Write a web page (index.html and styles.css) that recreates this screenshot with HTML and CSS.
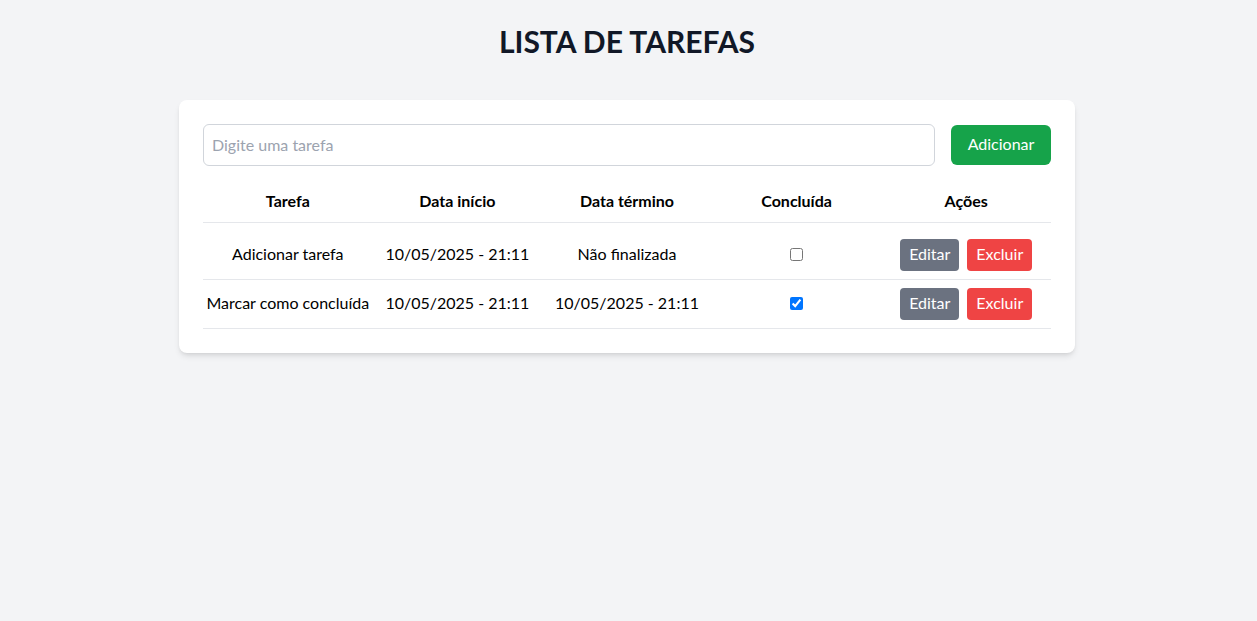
FILE: index.html
```html
<!DOCTYPE html>
<html lang="pt-BR">
<head>
<meta charset="utf-8">
<title>Lista de Tarefas</title>
<link rel="stylesheet" href="styles.css">
</head>
<body>
<main class="page">
  <h1 class="title">LISTA DE TAREFAS</h1>
  <section class="card">
    <form class="add-form">
      <input class="task-input" type="text" placeholder="Digite uma tarefa">
      <button class="btn btn-add" type="button">Adicionar</button>
    </form>
    <table class="tasks">
      <thead>
        <tr>
          <th>Tarefa</th>
          <th>Data início</th>
          <th>Data término</th>
          <th>Concluída</th>
          <th>Ações</th>
        </tr>
      </thead>
      <tbody>
        <tr class="first">
          <td><span class="txt">Adicionar tarefa</span></td>
          <td><span class="txt">10/05/2025 - 21:11</span></td>
          <td><span class="txt">Não finalizada</span></td>
          <td><input class="check" type="checkbox"></td>
          <td><div class="actions"><button class="btn btn-edit" type="button">Editar</button><button class="btn btn-del" type="button">Excluir</button></div></td>
        </tr>
        <tr>
          <td><span class="txt">Marcar como concluída</span></td>
          <td><span class="txt">10/05/2025 - 21:11</span></td>
          <td><span class="txt">10/05/2025 - 21:11</span></td>
          <td><input class="check" type="checkbox" checked></td>
          <td><div class="actions"><button class="btn btn-edit" type="button">Editar</button><button class="btn btn-del" type="button">Excluir</button></div></td>
        </tr>
      </tbody>
    </table>
  </section>
</main>
</body>
</html>
```
FILE: styles.css
```css
* { box-sizing: border-box; }
html, body { margin: 0; padding: 0; }
body {
  background: #f3f4f6;
  font-family: "Lato", "Noto Sans", sans-serif;
  font-size: 16px;
  line-height: 24px;
  color: #000;
}
.page { padding: 23px 27px 24px 24px; }
.title {
  margin: 0 0 41px;
  text-align: center;
  font-size: 30px;
  line-height: 36px;
  font-weight: 700;
  color: #111827;
}
.card {
  width: 896px;
  margin: 0 auto;
  background: #fff;
  border-radius: 8px;
  padding: 24px;
  box-shadow: 0 4px 6px -1px rgba(0,0,0,0.1), 0 2px 4px -2px rgba(0,0,0,0.1);
}
.add-form {
  display: flex;
  align-items: center;
  gap: 16px;
}
.task-input {
  flex: 1;
  height: 42px;
  border: 1px solid #d1d5db;
  border-radius: 6px;
  padding: 7px 8px 9px;
  font: inherit;
  color: #111827;
  outline: none;
}
.task-input::placeholder { color: #9ca3af; }
.btn {
  border: 0;
  font: inherit;
  color: #fff;
  border-radius: 4px;
  cursor: pointer;
}
.btn-add {
  width: 100px;
  height: 40px;
  padding: 7px 16px 9px;
  background: #16a34a;
  border-radius: 6px;
}
.tasks {
  width: 100%;
  margin-top: 16px;
  border-collapse: collapse;
  table-layout: fixed;
}
.tasks th, .tasks td {
  padding: 7px 0 9px;
  text-align: center;
  vertical-align: middle;
  border-bottom: 1px solid #e5e7eb;
  white-space: nowrap;
}
.tasks td { padding: 8px 0; }
.tasks th { font-weight: 700; }
.tasks tr.first td { padding-top: 16px; }
.txt { display: block; margin: -1px 0 1px; }
.check { display: block; width: 13px; height: 13px; margin: -1px auto 1px; accent-color: #0075ff; }
.actions {
  display: flex;
  justify-content: center;
  gap: 8px;
}
.btn-edit, .btn-del {
  height: 32px;
  padding: 3px 9px 5px;
}
.btn-edit { background: #6b7280; }
.btn-del { background: #ef4444; }
```
